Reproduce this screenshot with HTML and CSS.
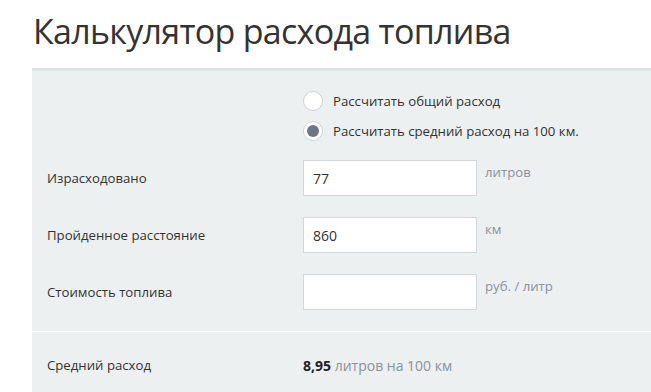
FILE: index.html
```html
<!DOCTYPE html>
<html lang="ru">

<head>
    <meta charset="UTF-8">
    <meta name="viewport" content="width=device-width, initial-scale=1.0">
    <title>Калькулятор расхода топлива</title>
    <link rel="stylesheet" href="styles.css">
</head>

<body>
    <div class="page">
        <h1 class="title">Калькулятор расхода топлива</h1>

        <form class="calc">
            <div class="modes">
                <label class="radio">
                    <input type="radio" name="mode" value="total">
                    <span class="radio-mark"></span>
                    Рассчитать общий расход
                </label>
                <label class="radio">
                    <input type="radio" name="mode" value="avg" checked>
                    <span class="radio-mark"></span>
                    Рассчитать средний расход на 100 км.
                </label>
            </div>

            <div class="field">
                <label class="field-label" for="used">Израсходовано</label>
                <input class="field-input" id="used" type="text" value="77">
                <span class="field-unit">литров</span>
            </div>
            <div class="field">
                <label class="field-label" for="dist">Пройденное расстояние</label>
                <input class="field-input" id="dist" type="text" value="860">
                <span class="field-unit">км</span>
            </div>
            <div class="field">
                <label class="field-label" for="price">Стоимость топлива</label>
                <input class="field-input" id="price" type="text" value="">
                <span class="field-unit">руб. / литр</span>
            </div>

            <div class="result">
                <span class="field-label">Средний расход</span>
                <span class="result-value"><b>8,95</b> литров на 100 км</span>
            </div>
        </form>
    </div>
</body>

</html>
```

FILE: styles.css
```css
html {
    font-family: "Open Sans", "Noto Sans", Arial, sans-serif;
    color: #333;
}

body {
    margin: 0;
    background: #fff;
}

.page {
    padding-left: 32px;
}

.title {
    margin: 0;
    padding: 8px 0 0 1px;
    height: 60px;
    font-size: 34px;
    font-weight: 400;
    letter-spacing: -0.7px;
    color: #333;
}

.calc {
    background: #ecf0f1;
    border-top: 3px solid #dde3e4;
    padding-top: 20px;
    font-size: 13.2px;
}

.modes {
    display: flex;
    flex-direction: column;
    gap: 10px;
    padding-left: 271px;
    margin-bottom: 19px;
}

.radio {
    display: flex;
    align-items: center;
    gap: 10px;
    height: 20px;
    cursor: pointer;

    input {
        display: none;
    }
}

.radio-mark {
    width: 20px;
    height: 20px;
    box-sizing: border-box;
    border: 1px solid #cfd3d6;
    border-radius: 50%;
    background: #fff;
    display: flex;
    justify-content: center;
    align-items: center;
}

.radio input:checked + .radio-mark::after {
    content: "";
    width: 12px;
    height: 12px;
    border-radius: 50%;
    background: #6b7786;
}

.field {
    display: grid;
    grid-template-columns: 256px 174px auto;
    align-items: center;
    padding-left: 15px;
    height: 36px;
    margin-bottom: 21px;
}

.field-unit {
    align-self: start;
    margin-top: 3px;
    padding-left: 8px;
    color: #8a929a;
}

.field-input {
    box-sizing: border-box;
    width: 174px;
    height: 36px;
    border: 1px solid #d3d7da;
    background: #fff;
    padding: 0 9px;
    font: inherit;
    font-size: 14px;
    color: #333;
    outline: none;
}

.field:last-of-type {
    margin-bottom: 19px;
}

.result {
    display: grid;
    grid-template-columns: 256px auto;
    align-items: center;
    padding-left: 15px;
    border-top: 1px solid #f8fafa;
    height: 66px;
}

.result-value {
    color: #8a929a;
    font-size: 14px;

    b {
        color: #222;
        font-weight: 700;
    }
}
```
